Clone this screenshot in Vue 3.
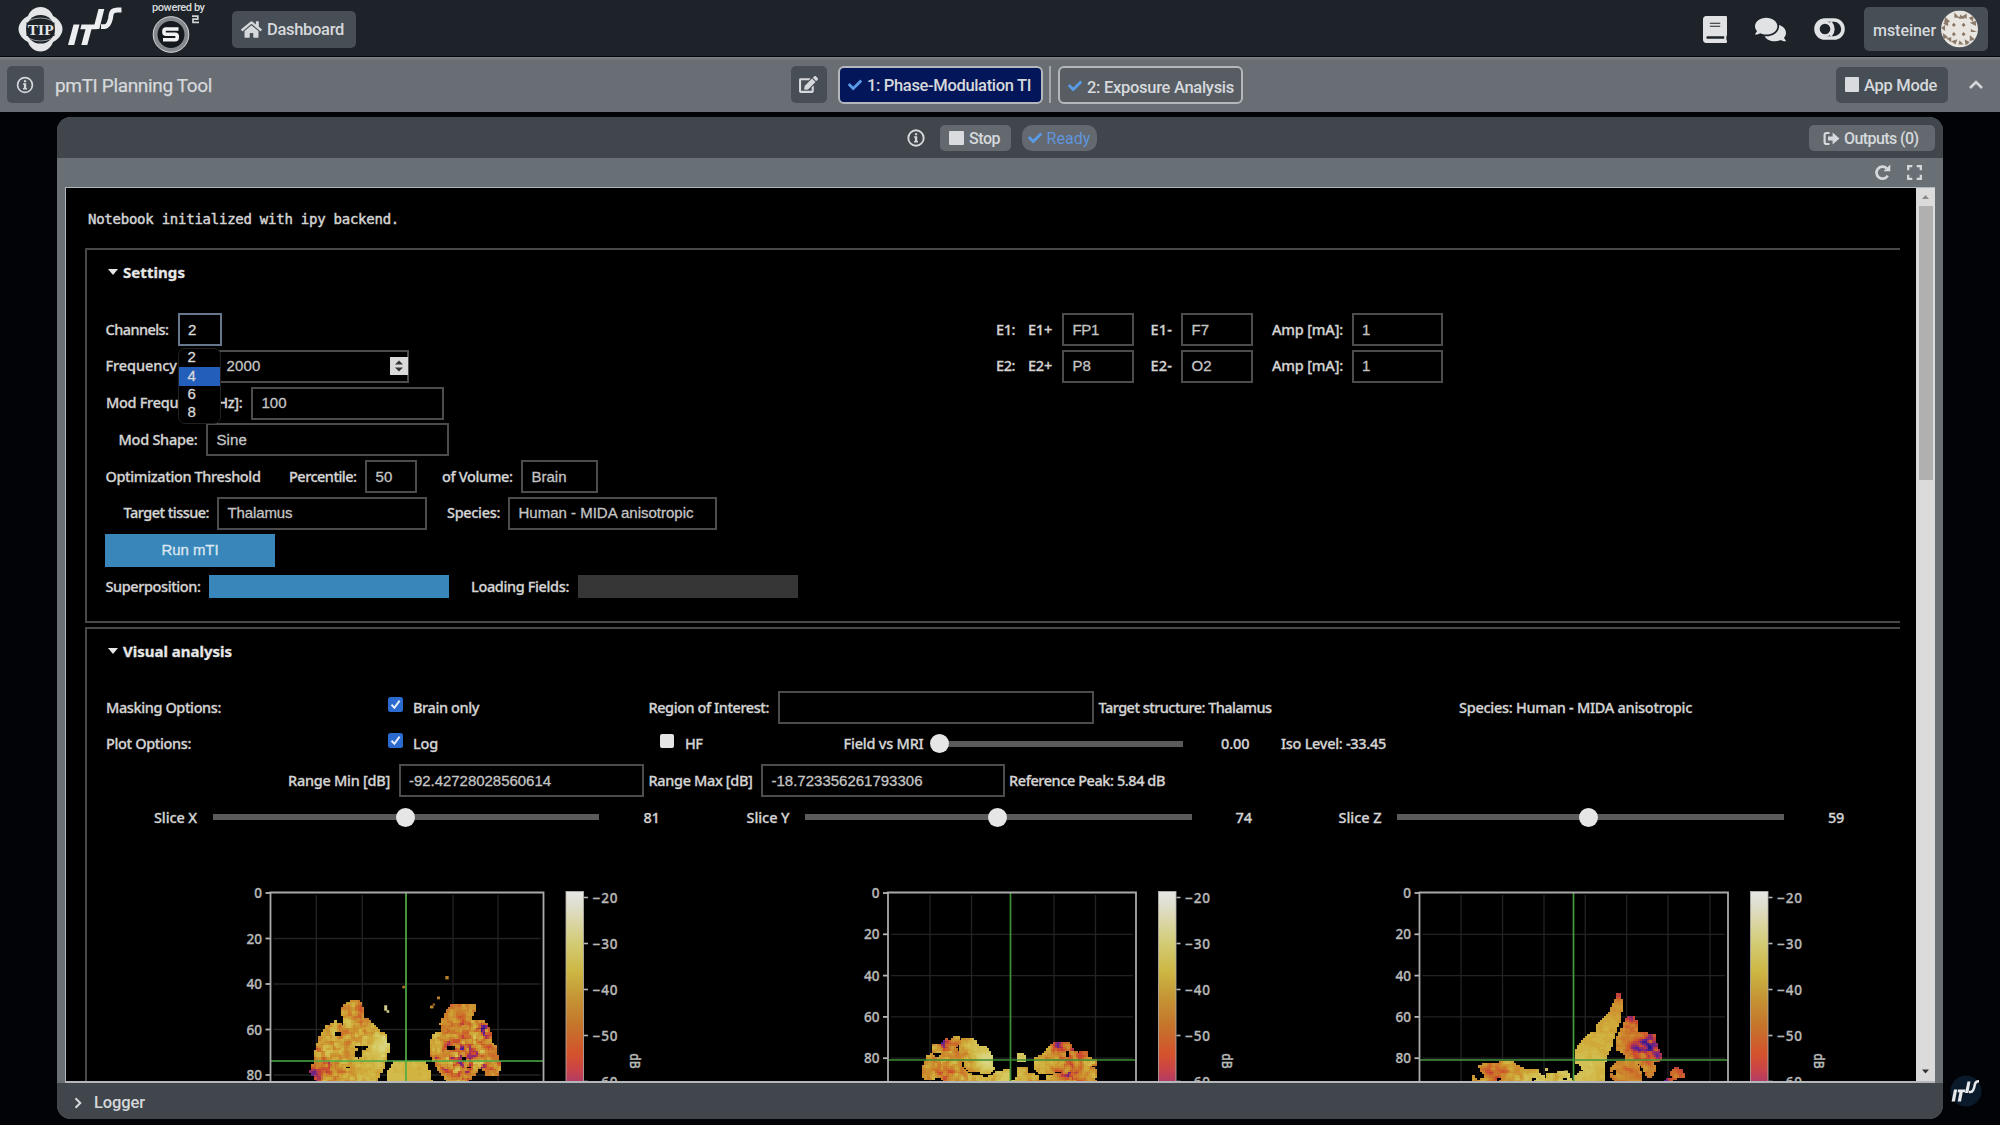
<script setup>
import { computed } from 'vue'

const CHECK = 'M173.898 439.404l-166.4-166.4c-9.997-9.997-9.997-26.206 0-36.204l36.203-36.204c9.997-9.998 26.207-9.998 36.204 0L192 312.69 432.095 72.596c9.997-9.997 26.207-9.997 36.204 0l36.203 36.204c9.997 9.997 9.997 26.206 0 36.204l-294.4 294.401c-9.998 9.997-26.207 9.997-36.204-.001z'

// Tracks a label so that it spans the given width.
const vFit = {
  mounted(el, { value }) {
    if (!value) return
    const range = document.createRange()
    range.selectNodeContents(el)
    const w = range.getBoundingClientRect().width
    const n = el.textContent.trim().length
    if (w && n) el.style.letterSpacing = (value - w) / n + 'px'
  }
}

// Turns [kind, start, width, text, extra] cells into flex items with a leading gap.
function row(origin, cells) {
  let end = origin
  return cells.map(([kind, x, w, text = '', extra]) => {
    const item = { kind, w, text, extra, gap: x - end }
    end = x + w
    return item
  })
}
const cellStyle = c => ({ marginLeft: c.gap + 'px', width: c.w + 'px' })

const settings = [
  row(87, [['label', 105.5, 63, 'Channels:'], ['select', 177.5, 44, '2'], ['label', 996, 19, 'E1:'], ['label', 1028, 24, 'E1+'], ['input', 1062, 71.5, 'FP1', 26.5], ['label', 1150.5, 21.5, 'E1-'], ['input', 1181, 71.5, 'F7', 17.5], ['label', 1272, 71, 'Amp [mA]:'], ['input', 1351.5, 91.5, '1']]),
  row(87, [['label', 105.5, 106, 'Frequency [Hz]:'], ['spin', 216, 193, '2000', 34], ['label', 996, 19, 'E2:'], ['label', 1028, 24, 'E2+'], ['input', 1062, 71.5, 'P8', 18.5], ['label', 1150.5, 21.5, 'E2-'], ['input', 1181, 71.5, 'O2', 20], ['label', 1272, 71, 'Amp [mA]:'], ['input', 1351.5, 91.5, '1']]),
  row(87, [['label', 106, 136.5, 'Mod Frequency [Hz]:'], ['input', 251, 193, '100', 25]]),
  row(87, [['label', 118.5, 79, 'Mod Shape:'], ['input', 206, 243, 'Sine', 30.5]]),
  row(87, [['label', 105.5, 155, 'Optimization Threshold'], ['label', 289, 67.5, 'Percentile:'], ['input', 365, 52, '50', 17], ['label', 442, 70.5, 'of Volume:'], ['input', 521, 77, 'Brain', 35]]),
  row(87, [['label', 123.5, 85.5, 'Target tissue:'], ['input', 217, 209.5, 'Thalamus', 65], ['label', 447, 53, 'Species:'], ['input', 508, 209, 'Human - MIDA anisotropic', 175]]),
  row(87, [['button', 105, 170, 'Run mTI', 57]]),
  row(87, [['label', 105.5, 95, 'Superposition:'], ['done', 209, 240], ['label', 471, 98, 'Loading Fields:'], ['idle', 578, 220]])
]

const analysis = [
  row(87, [['label', 106, 115, 'Masking Options:'], ['on', 388, 15], ['label', 413, 66, 'Brain only'], ['label', 648.5, 120.5, 'Region of Interest:'], ['input', 778, 316], ['label', 1098.5, 173, 'Target structure: Thalamus'], ['label', 1459, 233, 'Species: Human - MIDA anisotropic']]),
  row(87, [['label', 106, 85, 'Plot Options:'], ['on', 388, 15], ['label', 413, 25, 'Log'], ['off', 660, 14], ['label', 685, 17.5, 'HF'], ['label', 843.5, 80, 'Field vs MRI'], ['slider', 939, 244, '', 0], ['label', 1221, 28.5, '0.00'], ['label', 1281, 105, 'Iso Level: -33.45']]),
  row(87, [['label', 288, 102, 'Range Min [dB]'], ['input', 398.5, 245.5, '-92.42728028560614', 142], ['label', 648.5, 104, 'Range Max [dB]'], ['input', 761, 244, '-18.723356261793306', 151], ['label', 1009, 156, 'Reference Peak: 5.84 dB']]),
  row(87, [['label', 154, 43, 'Slice X'], ['slider', 213, 386, '', 49.8], ['label', 643.5, 16, '81'], ['label', 746.5, 43, 'Slice Y'], ['slider', 805, 387, '', 49.7], ['label', 1235.5, 16.5, '74'], ['label', 1338.5, 43, 'Slice Z'], ['slider', 1397, 387, '', 49.6], ['label', 1828, 16, '59']])
]

const options = ['2', '4', '6', '8']

/* ---- field maps ---- */
const stops = [
  [0, [35, 25, 130]], [0.13, [78, 32, 150]], [0.25, [150, 44, 105]], [0.34, [205, 68, 48]],
  [0.46, [204, 112, 42]], [0.58, [204, 144, 46]], [0.7, [208, 176, 62]], [0.84, [214, 204, 100]], [1, [226, 224, 180]]
]
function colour(v) {
  v = Math.max(0, Math.min(1, v))
  for (let i = 1; i < stops.length; i++) {
    if (v <= stops[i][0]) {
      const [a, ca] = stops[i - 1]
      const [b, cb] = stops[i]
      const t = (v - a) / (b - a)
      return 'rgb(' + ca.map((c, k) => Math.round(c + (cb[k] - c) * t)).join(',') + ')'
    }
  }
}
const hash = (x, y) => {
  const s = Math.sin(x * 127.1 + y * 311.7) * 43758.5453
  return s - Math.floor(s)
}
function noise(x, y) {
  const i = Math.floor(x), j = Math.floor(y)
  const f = x - i, g = y - j
  const u = f * f * (3 - 2 * f), v = g * g * (3 - 2 * g)
  return (hash(i, j) * (1 - u) + hash(i + 1, j) * u) * (1 - v) + (hash(i, j + 1) * (1 - u) + hash(i + 1, j + 1) * u) * v - 0.5
}
function inside(p, x, y) {
  let r = false
  for (let i = 0, j = p.length - 1; i < p.length; j = i++) {
    const [xi, yi] = p[i], [xj, yj] = p[j]
    if (yi > y !== yj > y && x < ((xj - xi) * (y - yi)) / (yj - yi) + xi) r = !r
  }
  return r
}
const pairs = s => s.split(' ').map(p => p.split(',').map(Number))

function heat(map) {
  const bins = {}
  const c = map.cell
  for (let y = map.y0; y < 1083; y += c) {
    for (let x = map.x0; x < map.x1; x += c) {
      const u = (x + c / 2 - map.ox) * map.sx
      const v = (y + c / 2 - 880) * 3
      const blob = map.blobs.find(b => inside(b.pts, u, v))
      if (!blob) continue
      if (map.holes.some(([a, b, rx, ry]) => ((u - a) / rx) ** 2 + ((v - b) / ry) ** 2 < 1)) continue
      let val = blob.base
      let rough = blob.rough
      for (const [a, b, r, d, k = 0] of map.spots) {
        const g = Math.exp(-((u - a) ** 2 + (v - b) ** 2) / (r * r))
        val += g * d
        rough = Math.max(0.04, rough + g * k)
      }
      const n = rough * (0.9 * noise((u + v) / 24, (v - u * 0.7) / 17) + 0.9 * noise((u - v * 0.6) / 11 + 50, (v + u * 0.6) / 11))
      val += n
      const q = Math.round(Math.max(0, Math.min(1, val)) * 28)
      bins[q] = (bins[q] || '') + `M${x.toFixed(2)} ${y.toFixed(2)}h${c + 0.6}v${c + 0.6}h-${c + 0.6}z`
    }
  }
  return Object.entries(bins).map(([q, d]) => ({ fill: colour(q / 28), d }))
}

const maps = [
  {
    ox: 230, sx: 3, cell: 2.28, x0: 300, x1: 510, y0: 997.5,
    blobs: [
      { base: 0.62, rough: 0.28, pts: pairs('330,385 345,372 360,362 388,362 400,380 405,412 430,430 445,450 463,455 472,480 475,505 468,540 455,575 438,610 262,610 250,590 237,578 248,550 248,515 260,500 265,470 290,435 315,422 340,436 342,412 330,400') },
      { base: 0.72, rough: 0.05, pts: pairs('470,610 472,575 485,555 495,545 585,543 592,560 602,580 604,610') },
      { base: 0.54, rough: 0.32, pts: pairs('660,376 735,376 735,390 722,420 745,418 765,420 772,440 785,462 785,485 795,495 800,520 812,550 812,565 800,585 780,588 762,580 760,565 745,563 740,580 722,590 715,610 655,610 640,590 625,570 610,545 600,520 598,490 608,460 632,452 630,430 640,410 645,395') }
    ],
    holes: [[322, 463, 10, 8], [395, 502, 20, 8], [384, 520, 9, 14], [354, 562, 6, 6], [661, 503, 12, 9], [703, 537, 7, 9], [716, 562, 7, 6]],
    spots: [[455, 490, 38, 0.24, -0.2], [415, 560, 55, 0.1, -0.2], [252, 582, 30, -0.38], [300, 555, 28, -0.16, 0.15], [385, 395, 26, -0.16], [350, 455, 25, -0.06, 0.1], [760, 450, 32, -0.14, 0.3], [700, 530, 60, -0.13, 0.4], [615, 490, 28, 0.12, -0.2], [690, 395, 35, -0.02, -0.15], [780, 540, 30, 0.02, 0]],
    dots: [[402.3, 985.8, 2.6, 2.6, '#b5702a'], [445.3, 976, 3.4, 3.4, '#b87f2c'], [437, 996.5, 3, 2.8, '#b87f2c'], [430, 1005.6, 3.4, 2.8, '#c08a30'], [432.6, 1003.4, 2.4, 2.4, '#8e5a22'], [384.2, 1005.3, 3, 5.4, '#cfca8a'], [386.6, 1010.2, 2.6, 2.6, '#cfca8a']],
    left: 270.5, right: 543.5, step: 45.5, cols: [316.3, 362.3, 453, 498], cx: 406, cy: 1061, bar: 566, line: '#4fae46'
  },
  {
    ox: 840, sx: 3, cell: 2.07, x0: 918, x1: 1100, y0: 1034,
    blobs: [
      { base: 0.58, rough: 0.26, pts: pairs('275,495 300,490 315,476 335,484 337,469 355,469 358,488 368,474 402,472 412,495 440,503 455,522 461,565 450,582 430,582 415,574 388,572 372,562 368,545 362,550 378,575 400,585 440,592 470,574 505,568 508,597 520,602 530,590 535,560 560,560 565,578 585,585 605,598 620,585 645,582 668,574 655,570 640,582 600,580 580,563 585,530 610,520 625,500 640,486 685,484 695,505 715,515 745,510 745,532 770,535 770,550 750,560 770,570 770,590 745,590 770,600 770,610 310,610 300,590 270,602 250,595 243,572 255,545 262,525 280,515') },
      { base: 0.74, rough: 0.1, pts: pairs('530,530 535,515 552,515 555,530 560,542 534,546') }
    ],
    holes: [[288, 522, 12, 6], [354, 502, 6, 10], [680, 522, 8, 9], [608, 592, 15, 6]],
    spots: [[435, 535, 36, 0.26, -0.2], [400, 490, 25, 0.13, -0.15], [315, 488, 20, -0.38, 0.1], [312, 575, 22, -0.14, 0.1], [660, 500, 30, -0.18, 0.1], [685, 580, 30, -0.28, 0.25], [710, 520, 25, -0.12, 0.3], [600, 550, 30, 0.08, -0.1], [500, 595, 90, 0.17, -0.12]],
    dots: [],
    left: 888, right: 1136, step: 41.3, cols: [930, 971.5, 1054, 1095.5], cx: 1010.5, cy: 1060, bar: 1158.5, line: '#3c8f34'
  },
  {
    ox: 1370, sx: 2.489, cell: 2.06, x0: 1468, x1: 1690, y0: 991,
    blobs: [
      { base: 0.66, rough: 0.07, pts: pairs('613,338 622,342 626,360 626,395 620,430 608,460 600,500 588,530 582,560 585,610 500,610 505,590 530,572 525,558 510,545 508,515 522,490 545,460 560,455 565,430 585,410 600,385 610,360') },
      { base: 0.5, rough: 0.2, pts: pairs('640,407 658,407 665,430 667,455 690,460 710,465 715,500 725,520 725,538 705,545 712,570 695,595 685,580 675,560 664,548 673,580 672,610 610,610 600,590 600,560 612,545 635,540 630,520 615,510 612,480 622,455 630,430 635,415') },
      { base: 0.64, rough: 0.18, pts: pairs('252,588 262,590 270,600 288,588 275,572 270,555 290,550 310,552 325,542 355,542 365,555 395,570 402,564 420,568 420,582 438,594 442,580 460,582 465,575 490,576 495,585 510,610 252,610') },
      { base: 0.4, rough: 0.25, pts: pairs('745,577 762,562 775,570 784,594 755,596 752,610 725,610 735,595 750,590') }
    ],
    holes: [[607, 577, 8, 8], [407, 597, 4, 8], [320, 598, 4, 7], [484, 596, 5, 6]],
    spots: [[616, 345, 18, -0.36], [616, 390, 24, -0.1], [540, 560, 60, 0.12], [648, 412, 20, -0.22, 0.2], [692, 490, 26, -0.38, 0.3], [710, 525, 18, -0.22, 0.2], [665, 515, 18, -0.2, 0.2], [305, 575, 38, -0.22, 0.1], [440, 598, 60, 0.12], [638, 480, 22, 0.0, -0.1], [735, 600, 16, -0.2]],
    dots: [[1545, 1068, 3, 3, '#d0c060'], [1564, 1070.5, 4, 3, '#d0c060']],
    left: 1419.5, right: 1728, step: 41.3, cols: [1461, 1502.5, 1544, 1585.3, 1626.6, 1668, 1710], cx: 1573.5, cy: 1060, bar: 1750.5, line: '#45983c'
  }
]
const plots = computed(() => maps.map(m => ({ ...m, cells: heat(m) })))
const rows = [0, 20, 40, 60, 80]
const levels = [20, 30, 40, 50, 60]
</script>

<template>
  <div class="page">
    <header class="top">
      <svg class="logos" width="220" height="56" viewBox="0 0 220 56">
        <path fill="#e4e6e8" d="M40.500 7c6.500 0 11 4.500 12.500 9 5 2.500 9.500 7.500 9.500 13s-4.500 10.500-9.500 13c-1.500 4.500-6 9.500-12.500 9.500s-11-5-12.500-9.500c-5-2.500-9.500-7.500-9.500-13s4.500-10.500 9.500-13c1.500-4.500 6-9 12.500-9z" />
        <circle cx="40.500" cy="29.300" r="14.300" fill="#1d2329" />
        <rect x="26.500" y="22.500" width="28" height="13.500" fill="#1d2329" />
        <path fill="none" stroke="#e4e6e8" stroke-width="1" d="M29 20.500q11.500-5 23 0M29 38.500q11.500 5 23 0" opacity=".6" />
        <text x="40.700" y="34.500" text-anchor="middle" class="tip" textLength="26">TIP</text>
        <g fill="#eceef0">
          <path d="M73.500 24.500h6l-5.300 20.500h-6.200z" />
          <path d="M81.500 24.500h16.500l-1.200 4.800h-5.300l-4.200 15.700h-6l4.200-15.700h-5.200z" />
          <path d="M98.500 9h5.800l-5 20h-6z" />
        </g>
        <path fill="none" stroke="#eceef0" stroke-width="4.800" d="M121.500 10h-4q-5.500 0-6.300 4.200-.3 2-.7 4.300-1.800 8-6 8.200h-3.500" />
        <text x="152" y="10.500" class="powered" textLength="53">powered by</text>
        <circle cx="171" cy="34.500" r="15.800" fill="none" stroke="#85898d" stroke-width="4.600" />
        <circle cx="171" cy="34.500" r="17.800" fill="none" stroke="#d0d2d4" stroke-width="1" />
        <circle cx="171" cy="34.500" r="13" fill="#15191d" />
        <path fill="none" stroke="#f2f2f2" stroke-width="3.600" stroke-linejoin="round" d="M178.500 29h-12.500q-2 0-2 2v1.200q0 2 2 2h9q2.200 0 2.200 2v1.300q0 2.200-2.200 2.200h-12" />
        <path fill="none" stroke="#cfd1d3" stroke-width="1.700" d="M192 16.200h5.800v2.900h-4.800v3.300h6" />
      </svg>
      <button class="btn dash">
        <svg width="21" height="19" viewBox="0 0 576 512"><path fill="currentColor" d="M280.370 148.260L96 300.110V464a16 16 0 0 0 16 16l112.060-.290a16 16 0 0 0 15.920-16V368a16 16 0 0 1 16-16h64a16 16 0 0 1 16 16v95.640a16 16 0 0 0 16 16.050L464 480a16 16 0 0 0 16-16V300L295.670 148.260a12.190 12.190 0 0 0-15.300 0zM571.600 251.470L488 182.560V44.050a12 12 0 0 0-12-12h-56a12 12 0 0 0-12 12v72.610L318.470 43a48 48 0 0 0-61 0L4.340 251.470a12 12 0 0 0-1.600 16.900l25.500 31A12 12 0 0 0 45.150 301l235.220-193.740a12.190 12.190 0 0 1 15.300 0L530.900 301a12 12 0 0 0 16.900-1.600l25.500-31a12 12 0 0 0-1.700-16.930z" /></svg>
        <span v-fit="77">Dashboard</span>
      </button>
      <div class="tools">
        <svg width="24" height="27" viewBox="0 0 448 512" preserveAspectRatio="none"><path fill="currentColor" d="M448 360V24c0-13.300-10.700-24-24-24H60C25 0 0 25 0 60v392c0 35 25 60 60 60h364c13.300 0 24-10.700 24-24v-16c0-7.500-3.500-14.300-8.900-18.700-4.200-15.400-4.200-59.300 0-74.700 5.400-4.300 8.900-11.100 8.900-18.600zM128 134c0-3.300 2.700-6 6-6h182c3.300 0 6 2.700 6 6v6c0 3.300-2.700 6-6 6H134c-3.300 0-6-2.700-6-6v-6zm0 56c0-3.300 2.700-6 6-6h182c3.300 0 6 2.700 6 6v6c0 3.300-2.700 6-6 6H134c-3.300 0-6-2.700-6-6v-6zM395 432H84c-12 0-20-8-20-24 0-16 8-24 20-24h311z" /></svg>
        <svg class="chat" width="31" height="27" viewBox="0 0 576 512" preserveAspectRatio="none"><path fill="currentColor" d="M416 192c0-88.400-93.100-160-208-160S0 103.600 0 192c0 34.300 14.100 65.900 38 92-13.400 30.200-35.500 54.200-35.800 54.500-2.200 2.300-2.800 5.700-1.500 8.700S4.800 352 8 352c36.600 0 66.900-12.300 88.700-25 32.200 15.700 70.300 25 111.300 25 114.900 0 208-71.600 208-160zm122 220c23.900-26 38-57.700 38-92 0-66.900-53.500-124.200-129.300-148.100.9 6.600 1.300 13.300 1.300 20.100 0 105.900-107.700 192-240 192-10.800 0-21.300-.8-31.700-1.900C207.800 439.600 281.800 480 368 480c41 0 79.100-9.200 111.300-25 21.800 12.700 52.100 25 88.700 25 3.200 0 6.100-1.900 7.300-4.800 1.300-2.900.7-6.300-1.500-8.700-.3-.3-22.400-24.200-35.800-54.500z" /></svg>
        <svg class="theme" width="31" height="22" viewBox="0 0 31 22"><rect x="2" y="2" width="27" height="18" rx="9" fill="none" stroke="currentColor" stroke-width="3.600" /><circle cx="11" cy="11" r="6.600" fill="none" stroke="currentColor" stroke-width="2.600" /><path fill="none" stroke="currentColor" stroke-width="2.800" d="M16.500 4q5.500 7 0 14" /></svg>
        <button class="btn user">
          <span v-fit="63">msteiner</span>
          <svg width="37" height="38" viewBox="0 0 36 36">
            <defs><clipPath id="round"><circle cx="18" cy="18" r="18" /></clipPath></defs>
            <g clip-path="url(#round)">
              <rect width="36" height="36" fill="#e9e6e1" />
              <path fill="#8b7a69" d="M13 2l5 5h-5zM19 4l4 4h-6zM25 3v5l-5-2zM4 6l5 5-6 1zM2 13l5-3v5zM0 17l4-3v6zM2 22l5 4-5 2zM5 27l5-1v5zM10 30l6-2-2 5zM18 29l4 4h-5zM23 28l5 3-4 3zM28 24l5 4-5 2zM29 18l6 3h-6zM28 12l6-2v5zM27 7l5-2-1 6zM12.500 12l2 2-2 2-2-2zM22 12l2 2-2 2-2-2zM12.500 21l2 2-2 2-2-2zM22 21l2 2-2 2-2-2z" />
            </g>
          </svg>
        </button>
      </div>
    </header>

    <nav class="bar">
      <button class="btn sq info"><svg width="18" height="18" viewBox="0 0 18 18"><circle cx="9" cy="9" r="7.400" fill="none" stroke="currentColor" stroke-width="1.700" /><path fill="currentColor" d="M7.900 4.200h2.300v2.100h-2.300zM7.100 7.300h3.100v4.600h.8v1.500h-4v-1.500h.9v-3.100h-.8z" /></svg></button>
      <h1 v-fit="157">pmTI Planning Tool</h1>
      <button class="btn sq edit"><svg width="19" height="17" viewBox="0 0 576 512"><path fill="currentColor" d="M402.600 83.200l90.200 90.200c3.800 3.800 3.800 10 0 13.800L274.400 405.600l-92.800 10.300c-12.400 1.400-22.900-9.100-21.500-21.500l10.300-92.800L388.800 83.200c3.800-3.800 10-3.800 13.800 0zm162-22.900l-48.800-48.800c-15.200-15.200-39.900-15.200-55.200 0l-35.400 35.400c-3.800 3.800-3.800 10 0 13.800l90.200 90.200c3.800 3.800 10 3.800 13.800 0l35.400-35.400c15.200-15.300 15.200-40 0-55.200zM384 346.200V448H64V128h229.800c3.200 0 6.200-1.300 8.500-3.500l40-40c7.600-7.600 2.200-20.500-8.500-20.500H48C21.500 64 0 85.500 0 112v352c0 26.500 21.500 48 48 48h352c26.500 0 48-21.500 48-48V306.200c0-10.700-12.900-16-20.500-8.500l-40 40c-2.200 2.300-3.500 5.300-3.500 8.500z" /></svg></button>
      <button class="step active"><svg class="tick" width="14" height="14" viewBox="0 0 512 512"><path fill="currentColor" :d="CHECK" /></svg><span v-fit="164">1: Phase-Modulation TI</span></button>
      <i class="sep"></i>
      <button class="step second"><svg class="tick" width="14" height="14" viewBox="0 0 512 512"><path fill="currentColor" :d="CHECK" /></svg><span v-fit="147">2: Exposure Analysis</span></button>
      <button class="btn mode"><i class="block"></i><span v-fit="73">App Mode</span></button>
      <svg class="up" width="16" height="11" viewBox="0 0 16 11"><path d="M2 9l6-6 6 6" fill="none" stroke="currentColor" stroke-width="2.600" /></svg>
    </nav>

    <main class="panel">
      <div class="head">
        <svg class="hinfo" width="18" height="18" viewBox="0 0 18 18"><circle cx="9" cy="9" r="7.700" fill="none" stroke="currentColor" stroke-width="1.900" /><path fill="currentColor" d="M7.900 4.200h2.300v2.100h-2.300zM7.100 7.300h3.100v4.600h.8v1.500h-4v-1.500h.9v-3.100h-.8z" /></svg>
        <button class="chip stop"><i class="block"></i><span v-fit="31">Stop</span></button>
        <span class="chip ready"><svg class="tick" width="14" height="14" viewBox="0 0 512 512"><path fill="currentColor" :d="CHECK" /></svg><span v-fit="44">Ready</span></span>
        <button class="chip outputs"><svg width="17" height="15" viewBox="0 0 17 15"><path fill="none" stroke="currentColor" stroke-width="2.200" d="M6.500 2H3.600Q1.600 2 1.600 4v7q0 2 2 2h2.900" /><path fill="currentColor" d="M5 5.400h4.600V1.600l6.900 5.900-6.900 5.900V9.600H5z" /></svg><span v-fit="74.500">Outputs (0)</span></button>
      </div>
      <div class="sub">
        <svg width="17" height="17" viewBox="0 0 17 17"><path fill="none" stroke="currentColor" stroke-width="2.700" d="M12.600 4.200A6 6 0 1 0 13.700 11.600" /><path fill="currentColor" d="M16.300.5v6.700H9.500z" /></svg>
        <svg class="exp" width="15" height="15" viewBox="0 0 15 15"><path fill="none" stroke="currentColor" stroke-width="2.300" d="M1.200 5.300V1.200h4.100M9.700 1.200h4.100v4.100M13.800 9.700v4.100H9.700M5.300 13.800H1.200V9.700" /></svg>
      </div>

      <div class="frame">
        <div class="notebook">
          <pre v-fit="311">Notebook initialized with ipy backend.</pre>

          <section class="box settings">
            <h2><i class="tri"></i><span v-fit="62">Settings</span></h2>
            <div class="rows">
              <div v-for="(r, i) in settings" :key="i" class="row">
                <div v-for="(c, j) in r" :key="j" :class="['cell', c.kind]" :style="cellStyle(c)">
                  <span v-if="c.kind === 'label'" v-fit="c.w">{{ c.text }}</span>
                  <span v-else-if="c.text" v-fit="c.extra">{{ c.text }}</span>
                  <svg v-if="c.kind === 'spin'" class="spinner" width="18" height="18" viewBox="0 0 18 18"><rect width="18" height="18" fill="#dadada" /><path fill="#333" d="M9 3.600l4 4H5zM9 14.400l-4-4h8z" /></svg>
                  <ul v-if="c.kind === 'select'" class="menu">
                    <li v-for="o in options" :key="o" :class="{ hot: o === '4' }">{{ o }}</li>
                  </ul>
                </div>
              </div>
            </div>
          </section>

          <section class="box visual">
            <h2><i class="tri"></i><span v-fit="109">Visual analysis</span></h2>
            <div class="rows">
              <div v-for="(r, i) in analysis" :key="i" class="row">
                <div v-for="(c, j) in r" :key="j" :class="['cell', c.kind]" :style="cellStyle(c)">
                  <span v-if="c.kind === 'label'" v-fit="c.w">{{ c.text }}</span>
                  <svg v-else-if="c.kind === 'on'" width="15" height="15" viewBox="0 0 15 15"><rect width="15" height="15" rx="2.500" fill="#2b6bd0" /><path d="M3.500 7.800l2.900 3 5.200-7.200" fill="none" stroke="#e8eefc" stroke-width="2" /></svg>
                  <b v-else-if="c.kind === 'slider'" class="knob" :style="{ left: c.extra + '%' }"></b>
                  <span v-else-if="c.text" v-fit="c.extra">{{ c.text }}</span>
                </div>
              </div>
            </div>
            <svg class="plots" width="1829" height="212" viewBox="87 870 1829 212">
              <defs>
                <linearGradient id="scale" gradientUnits="userSpaceOnUse" x1="0" y1="891" x2="0" y2="1082">
                  <stop offset="0" stop-color="#e6e6e6" /><stop offset=".07" stop-color="#e0dfcf" /><stop offset=".27" stop-color="#d3cb76" />
                  <stop offset=".42" stop-color="#cdb744" /><stop offset=".55" stop-color="#c59735" /><stop offset=".7" stop-color="#c4752b" />
                  <stop offset=".86" stop-color="#d4512d" /><stop offset=".94" stop-color="#c8434a" /><stop offset="1" stop-color="#b23b66" />
                </linearGradient>
              </defs>
              <g v-for="(p, i) in plots" :key="i">
                <g stroke="#232323" stroke-width="1.300">
                  <path v-for="x in p.cols" :key="x" :d="`M${x} 895V1082`" />
                  <path v-for="n in rows.slice(1)" :key="n" :d="`M${p.left + 3} ${893 + (n / 20) * p.step}H${p.right - 3}`" />
                </g>
                <g shape-rendering="crispEdges"><path v-for="(c, k) in p.cells" :key="k" :d="c.d" :fill="c.fill" /></g>
                <rect v-for="(d, k) in p.dots" :key="'d' + k" :x="d[0]" :y="d[1]" :width="d[2]" :height="d[3]" :fill="d[4]" />
                <path :d="`M${p.cx} 893V1082M${p.left} ${p.cy}H${p.right}`" :stroke="p.line" stroke-width="1.700" fill="none" />
                <path :d="`M${p.left} 1083V892.500H${p.right}V1083`" stroke="#a9a9a9" stroke-width="1.800" fill="none" />
                <g v-for="n in rows" :key="'r' + n">
                  <path :d="`M${p.left - 5} ${893 + (n / 20) * p.step}h5`" stroke="#b5b5b5" stroke-width="1.800" />
                  <text class="ax" :x="p.left - 8.500" :y="898 + (n / 20) * p.step" text-anchor="end">{{ n }}</text>
                </g>
                <rect :x="p.bar" y="891.500" width="17.500" height="192" fill="url(#scale)" stroke="#b9b3ae" stroke-width=".8" />
                <g v-for="(l, k) in levels" :key="'l' + l">
                  <path :d="`M${p.bar + 18} ${897.500 + k * 46}h4`" stroke="#b5b5b5" stroke-width="1.600" />
                  <text class="ax" :x="p.bar + 26.500" :y="903 + k * 46" textLength="25">−{{ l }}</text>
                </g>
                <text class="ax" :transform="`translate(${p.bar + 63.500} 1061) rotate(90)`" text-anchor="middle" textLength="15.500" lengthAdjust="spacingAndGlyphs">dB</text>
              </g>
            </svg>
          </section>
        </div>
        <div class="scroll">
          <svg width="19" height="18" viewBox="0 0 19 18"><path d="M6 11l3.500-4 3.500 4z" fill="#8a8a8a" /></svg>
          <i class="thumb"></i>
          <svg class="down" width="19" height="19" viewBox="0 0 19 19"><path d="M6 7.500l3.500 4 3.500-4z" fill="#333" /></svg>
        </div>
      </div>

      <footer class="foot">
        <svg width="8" height="12" viewBox="0 0 8 12"><path d="M1.500 1.200L6.300 6l-4.800 4.800" fill="none" stroke="currentColor" stroke-width="2" /></svg>
        <span v-fit="51">Logger</span>
      </footer>
    </main>
    <svg class="badge" width="32" height="38" viewBox="0 0 32 38">
      <ellipse cx="16" cy="19" rx="15.500" ry="15.500" fill="#0b1a2b" />
      <g fill="#e6e8ea">
        <path d="M4 17.500h3.200l-2.300 12h-3.300z" />
        <path d="M8 17.500h7.500l-.6 2.700h-2.200l-1.700 9.300H7.700l1.700-9.300H7.500z" />
        <path d="M17.500 9.500h3l-2.200 11.500h-3.300z" />
      </g>
      <path fill="none" stroke="#e6e8ea" stroke-width="2.500" d="M29 9.200q-3.600 0-4.200 3.300-1 7.300-4.300 7.500h-1.500" />
    </svg>
  </div>
</template>

<style scoped>
* { box-sizing: border-box; }
.page { position: relative; width: 2000px; height: 1125px; overflow: hidden; display: flex; flex-direction: column; background: #010307; color: #d6d9dc; font-family: Roboto, sans-serif; }
svg { display: block; flex: none; }
span, h1, pre { white-space: nowrap; }
button { font: inherit; color: inherit; border: 0; padding: 0; margin: 0; display: flex; align-items: center; }
.btn { background: #484e55; border-radius: 5px; }
.top { height: 57px; flex: none; display: flex; align-items: center; background: #1d2329; border-bottom: 1px solid #050608; font-size: 16.500px; }
.logos { margin-top: 0; }
.tip { font: bold 15.500px "Liberation Serif", serif; fill: #e4e6e8; }
.powered { font: 500 11px Roboto, sans-serif; fill: #d6d9dc; }
.dash { margin: 2px 0 0 12px; width: 124px; height: 37px; padding: 1px 0 0 9px; gap: 5px; font-weight: 500; }
.tools { margin: 2px 0 0 auto; display: flex; align-items: center; padding-right: 12px; color: #e0e2e4; }
.chat { margin-left: 28px; }
.theme { margin-left: 28px; }
.user { margin: 0 0 0 19px; width: 124px; height: 44px; padding-left: 9px; gap: 5px; font-weight: 500; font-size: 16px; color: #d6d9dc; }
.user span { padding-top: 2px; }
.bar { height: 55px; flex: none; display: flex; align-items: center; background: linear-gradient(#7b8086 0, #7b8086 1px, #696e74 3px); font-size: 16.500px; }
.sq { width: 36.500px; height: 36.500px; justify-content: center; }
.info { margin: 0 0 0 7px; }
h1 { margin: 1px 0 0 11.500px; width: 157px; font-size: 19px; font-weight: 400; -webkit-text-stroke: 0.25px; }
.edit { margin: 0 0 0 578.500px; }
.step { height: 38px; border: 2px solid #b4b8bd; border-radius: 6px; font-weight: 500; gap: 5px; padding: 1px 0 0 8.500px; background: #5b6167; }
.active { margin-left: 10.500px; width: 205px; background: #04165a; }
.second { margin-left: 7px; width: 185.500px; background: #575d63; padding-top: 5px; }
.second .tick { margin-top: -3px; }
.sep { width: 1.500px; height: 37px; background: #a3a7ac; margin-left: 6.500px; }
.tick { color: #5a9be8; }
.mode { margin: 0 0 0 auto; width: 112px; height: 36px; padding-left: 8.500px; gap: 5px; font-weight: 500; }
.mode span { padding-top: 2px; }
.block { width: 14.500px; height: 14.500px; background: #d9dbde; flex: none; border-radius: 1px; }
.up { margin: 0 16px 0 20px; }
.panel { margin: 5px 57.500px 0 57px; height: 1002px; display: flex; flex-direction: column; border-radius: 14px; overflow: hidden; background: #686f75; }
.head { height: 41px; flex: none; display: flex; align-items: center; background: #40464b; padding-right: 8px; font-size: 16px; }
.hinfo { margin-left: 850px; }
.chip { height: 26.500px; display: flex; align-items: center; background: #63696f; border-radius: 5px; font-weight: 500; }
.chip span { padding-top: 1px; }
.stop { margin: 1px 0 0 15px; width: 70.500px; padding-left: 9px; gap: 5.500px; }
.ready { margin: 1px 0 0 11.500px; width: 75px; border-radius: 10px; padding-left: 6px; gap: 4.500px; color: #5f95dc; font-weight: 400; }
.outputs { margin: 1px 0 0 auto; width: 126px; padding-left: 14px; gap: 4.500px; }
.sub { height: 29px; flex: none; display: flex; align-items: center; justify-content: flex-end; padding-right: 21px; gap: 16px; }
.frame { height: 896px; flex: none; margin: 0 7.500px 0 8px; display: flex; border: solid #b3b6ba; border-width: 1.500px 0 2px 1px; background: #000; }
.notebook { width: 1850px; height: 893px; overflow: hidden; color: #d3d3d3; padding-left: 19px; }
pre { margin: 22px 0 0 3px; height: 19px; font: 14px/18px "DejaVu Sans Mono", monospace; width: 311px; -webkit-text-stroke: 0.45px; }
.box { border: 2px solid #484848; border-right: 0; width: 1815px; font: 500 14.500px/20px "Noto Sans", sans-serif; }
.box span { -webkit-text-stroke: 0.3px; }
.settings { margin-top: 19px; height: 375px; }
.visual { margin-top: 4px; height: 480px; border-bottom: 0; }
h2 { margin: 12px 0 0 21px; height: 20px; display: flex; align-items: center; gap: 5px; font-size: 15px; font-weight: 700; color: #e6e6e6; }
h2 span { margin-top: -1px; }
.rows { display: flex; flex-direction: column; gap: 3.800px; margin-top: 31px; }
.tri { border: 5px solid transparent; border-top: 6px solid #e6e6e6; border-bottom: 0; }
.visual .rows { margin-top: 29.500px; }
.row { height: 33px; display: flex; align-items: center; }
.cell { flex: none; }
.label { display: flex; white-space: nowrap; margin-top: -2px; }
.visual .label { margin-top: -1px; }
.input, .spin, .select { height: 33px; border: 2px solid #4c4c4c; display: flex; align-items: center; padding-left: 8.500px; font-family: "Liberation Sans", sans-serif; font-size: 15px; color: #c4c4c4; }
.spin { position: relative; }
.spinner { margin: 0 -1px 0 auto; }
.select { position: relative; border-color: #66788c; color: #d8d8d8; }
.menu { position: absolute; left: -2px; top: 32.500px; width: 43.500px; height: 76px; margin: 0; padding: 0 0 5px; list-style: none; background: #000; border: 1px solid #222; border-radius: 7px; z-index: 3; line-height: 16.500px; -webkit-text-stroke: 0.3px; }
.menu li { padding-left: 9px; height: 18.500px; }
.menu .hot { background: #235ebb; line-height: 17px; }
.button { height: 32.500px; background: #3986ba; display: flex; align-items: center; justify-content: center; font-family: "Liberation Sans", sans-serif; font-size: 15px; color: #dbe8f2; }
.done, .idle { height: 23px; background: #3986ba; margin-top: -1px; }
.idle { background: #363636; }
.on { margin-top: -6px; }
.off { height: 13.500px; background: #e4e4e4; border-radius: 2px; margin-top: -6px; }
.slider { position: relative; height: 6px; background: #5b5b5b; }
.knob { position: absolute; top: -6.500px; width: 19px; height: 19px; margin-left: -9.500px; border-radius: 50%; background: #e6e6e6; }
.plots { margin-top: 36px; }
.ax { font: 500 13.500px "Noto Sans", sans-serif; fill: #b8b8b8; stroke: #b8b8b8; stroke-width: 0.35px; }
.scroll { width: 19px; background: #dbdbdb; display: flex; flex-direction: column; align-items: center; }
.thumb { width: 14px; height: 274px; background: #b0b0b0; }
.down { margin-top: auto; }
.foot { flex: 1; display: flex; align-items: center; background: #40464b; padding: 3px 0 0 17px; gap: 12px; font-size: 16.500px; font-weight: 500; }
.badge { position: absolute; left: 1950px; top: 1072px; }
</style>
<style>
body { background: #010307; overflow: hidden; }
</style>
